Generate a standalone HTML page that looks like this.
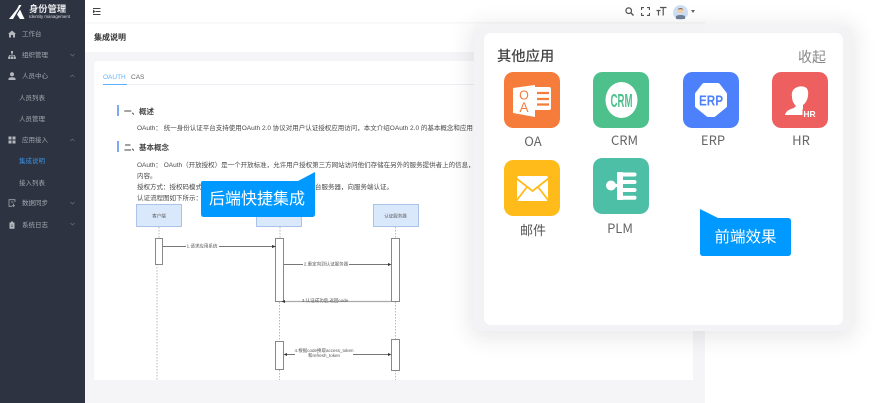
<!DOCTYPE html>
<html>
<head>
<meta charset="utf-8">
<style>
html,body{margin:0;padding:0;width:879px;height:403px;overflow:hidden;background:#fff}
*{box-sizing:border-box}
body{font-family:"Liberation Sans","Noto Sans CJK SC",sans-serif;position:relative}
.a{position:absolute;white-space:nowrap;line-height:1}
#side{position:absolute;left:0;top:0;width:85px;height:403px;background:#2d3340;}
.soft{filter:blur(.35px)}
.m{position:absolute;left:22px;font-size:6.5px;line-height:8px;color:#a4a8b0;white-space:nowrap}
.s{position:absolute;left:19px;font-size:6.5px;line-height:8px;color:#a4a8b0;white-space:nowrap}
.t{position:absolute;font-size:6.5px;line-height:8px;color:#4a4a4a;white-space:nowrap}
.h{position:absolute;left:124px;font-size:7.5px;line-height:9px;font-weight:bold;color:#444;white-space:nowrap}
.b{position:absolute;left:117px;width:2px;height:11px;background:#7da9f2}
.ic{position:absolute;width:56px;height:56px;border-radius:9px}
.l{position:absolute;font-family:"Noto Sans CJK SC","Liberation Sans",sans-serif;font-size:13px;line-height:16px;color:#666;text-align:center;width:60px;white-space:nowrap}
</style>
</head>
<body>
<!-- page background -->
<div style="position:absolute;left:85px;top:52px;width:620px;height:351px;background:#f5f5f7"></div>
<div style="position:absolute;left:85px;top:0;width:794px;height:22px;background:#fff;box-shadow:0 1px 3px rgba(0,0,0,.05)"></div>
<div class="a" style="left:94px;top:33.500px;font-size:8px;font-weight:bold;color:#333">集成说明</div>

<!-- hamburger -->
<svg style="position:absolute;left:93px;top:8px" width="8" height="7" viewBox="0 0 8 7"><path d="M0 .5H7.5M2.5 3.5H7.5M0 6.5H7.5M0 2.2L1.6 3.5L0 4.8Z" stroke="#444" stroke-width="1" fill="#444"/></svg>

<!-- header icons -->
<svg style="position:absolute;left:625px;top:7px" width="9" height="9" viewBox="0 0 9 9"><circle cx="3.7" cy="3.7" r="2.8" fill="none" stroke="#555" stroke-width="1.2"/><path d="M5.8 5.8L8.5 8.5" stroke="#555" stroke-width="1.4"/></svg>
<svg style="position:absolute;left:641px;top:7px" width="9" height="9" viewBox="0 0 9 9"><path d="M.5 3V.5H3M6 .5H8.5V3M8.5 6V8.5H6M3 8.5H.5V6" fill="none" stroke="#555" stroke-width="1.2"/></svg>
<svg style="position:absolute;left:656px;top:6px" width="11" height="10" viewBox="0 0 11 10"><path d="M4 1.5H10.5M7.2 1.5V9.5M.5 4.5H4.5M2.5 4.5V9.5" fill="none" stroke="#555" stroke-width="1.2"/></svg>
<svg style="position:absolute;left:673px;top:5px" width="15" height="15" viewBox="0 0 15 15"><circle cx="7.5" cy="7.5" r="7.5" fill="#cfe0f5"/><circle cx="7.5" cy="5.5" r="2.8" fill="#f4cfa8"/><path d="M4.7 4.8C5 2.5 10 2.5 10.3 4.8C8.5 3.9 6.5 3.9 4.7 4.8Z" fill="#6b5a4a"/><path d="M3 14V11.5C3 9.5 12 9.5 12 11.5V14Z" fill="#6f7f96"/></svg>
<svg style="position:absolute;left:691px;top:10px" width="4" height="3" viewBox="0 0 4 3"><path d="M0 0H4L2 3Z" fill="#666"/></svg>

<!-- right gutter -->
<div style="position:absolute;left:705px;top:22px;width:174px;height:381px;background:#fff"></div>

<!-- card -->
<div style="position:absolute;left:94px;top:61px;width:599px;height:319px;background:#fff;border-radius:4px 4px 0 0"></div>
<div class="soft">
<div class="a" style="left:103px;top:74.500px;font-size:6.5px;color:#5fb0ff">OAUTH</div>
<div class="a" style="left:131px;top:74.500px;font-size:6.5px;color:#666">CAS</div>
<div style="position:absolute;left:103px;top:83.500px;width:580px;height:1.500px;background:#eceef3"></div>
<div style="position:absolute;left:103px;top:83.500px;width:24px;height:1.500px;background:#5fb0ff"></div>

<div class="b" style="top:105px"></div>
<div class="h" style="top:107px">一、概述</div>
<div class="t" style="left:137px;top:124.500px">OAuth： 统一身份认证平台支持使用OAuth 2.0 协议对用户认证授权应用访问，本文介绍OAuth 2.0 的基本概念和应用</div>
<div class="b" style="top:141px"></div>
<div class="h" style="top:143px">二、基本概念</div>
<div class="t" style="left:137px;top:161.500px">OAuth： OAuth（开放授权）是一个开放标准，允许用户授权第三方网站访问他们存储在另外的服务提供者上的信息，</div>
<div class="t" style="left:137px;top:172.500px">内容。</div>
<div class="t" style="left:137px;top:183.500px">授权方式：授权码模式</div>
<div class="t" style="left:315px;top:183.500px">台服务器，向服务端认证。</div>
<div class="t" style="left:137px;top:194.500px">认证流程图如下所示：</div>

<!-- sequence diagram -->
<svg style="position:absolute;left:130px;top:200px" width="300" height="180" viewBox="130 200 300 180" font-family="Liberation Sans,Noto Sans CJK SC,sans-serif">
<g fill="#dae8fc" stroke="#a9c4eb" stroke-width="1">
<rect x="136.5" y="204.5" width="45" height="22"/>
<rect x="256.5" y="204.5" width="45" height="22"/>
<rect x="373.5" y="204.5" width="45" height="22"/>
</g>
<g stroke="#999" stroke-width=".7" stroke-dasharray="1.5 1.5" fill="none">
<path d="M159 227V238M157 264V380"/>
<path d="M280 227V238M279.5 302V341M279.5 370V380"/>
<path d="M395.5 227V238M395.5 302V339M395.5 370V380"/>
</g>
<g fill="#fff" stroke="#888" stroke-width="1">
<rect x="155.5" y="238.5" width="7" height="26"/>
<rect x="275.5" y="238.5" width="8" height="63"/>
<rect x="391.5" y="238.5" width="8" height="63"/>
<rect x="275.5" y="341.5" width="8" height="28"/>
<rect x="391.5" y="339.5" width="8" height="31"/>
</g>
<g stroke="#777" stroke-width="1" fill="none">
<path d="M163 246.5H186M219 246.5H274M283.5 264.5H303M349 264.5H390"/>
<path d="M391 301.5H302M349 301.5H282" stroke="#aaa" stroke-width="1.2"/>
<path d="M285 354.5H295M353 354.5H390"/>
</g>
<g fill="#333">
<path d="M276 246.5L272 245V248Z M391.5 264.5L388 263V266Z M281.5 301.5L285 300V303Z M283.5 354.5L287 353V356Z M391.5 354.5L388 353V356Z"/>
</g>
<g font-size="4.5" fill="#555" text-anchor="middle">
<text x="159" y="217.5">客户端</text>
<text x="395.5" y="217.5">认证服务器</text>
<text x="202" y="247.5">1.请求应用系统</text>
<text x="326" y="265.5">2.重定向到认证服务器</text>
<text x="325" y="302">3.认证成功后,返回code</text>
<text x="324" y="352">4.根据code换取access_token</text>
<text x="324" y="357">和refresh_token</text>
</g>
</svg>
</div>

<!-- sidebar -->
<div id="side">
<div class="soft">
<svg style="position:absolute;left:9px;top:5px" width="16" height="15" viewBox="0 0 16 15"><path d="M0 14L8 4L10 0H12.5L7 9L4 14Z" fill="#fff"/><path d="M8 9.5L11 4.500L15.5 14H11Z" fill="#fff"/></svg>
<div class="a" style="left:29px;top:5px;font-size:9.3px;font-weight:bold;color:#e8e8ea">身份管理</div>
<div class="a" style="left:29px;top:14.500px;font-size:4.4px;color:#d8d8dc">Identity management</div>

<svg style="position:absolute;left:8px;top:30px" width="8" height="8" viewBox="0 0 8 8"><path d="M4 .5L8 4H7V7.5H5V5H3V7.5H1V4H0Z" fill="#b4b7bd"/></svg>
<div class="m" style="top:30.500px">工作台</div>
<svg style="position:absolute;left:8px;top:51px" width="8" height="8" viewBox="0 0 8 8"><path d="M3 0H5V2.5H3ZM.2 5.5H2.4V8H.2ZM2.9 5.5H5.1V8H2.9ZM5.6 5.5H7.8V8H5.6ZM3.7 2.5H4.3V4H7V5.5H6.4V4.6H1.6V5.5H1V4H3.7Z" fill="#b4b7bd"/></svg>
<div class="m" style="top:51.500px">组织管理</div>
<svg style="position:absolute;left:8px;top:72px" width="8" height="8" viewBox="0 0 8 8"><circle cx="4" cy="2.2" r="2" fill="#b4b7bd"/><path d="M.5 8V6.5C.5 4.8 7.5 4.8 7.5 6.5V8Z" fill="#b4b7bd"/></svg>
<div class="m" style="top:72.500px">人员中心</div>
<div class="s" style="top:94.500px">人员列表</div>
<div class="s" style="top:115.500px">人员管理</div>
<svg style="position:absolute;left:8px;top:136px" width="8" height="8" viewBox="0 0 8 8"><path d="M.5 .5H3.5V3.5H.5ZM4.5 .5H7.5V3.5H4.5ZM.5 4.5H3.5V7.5H.5ZM4.5 4.5H7.5V7.5H4.5Z" fill="#b4b7bd"/></svg>
<div class="m" style="top:136.500px">应用接入</div>
<div class="s" style="top:157.500px;color:#3d8fe0">集成说明</div>
<div class="s" style="top:179.500px">接入列表</div>
<svg style="position:absolute;left:8px;top:199px" width="8" height="8" viewBox="0 0 8 8"><path d="M7 3V.7H1V7.3H4M3 3H5.5M5.5 4.5L5.5 7.5M4.3 6.3L5.5 7.5L6.7 6.3" fill="none" stroke="#a4a8b0" stroke-width=".8"/></svg>
<div class="m" style="top:199.500px">数据同步</div>
<svg style="position:absolute;left:8px;top:221px" width="8" height="8" viewBox="0 0 8 8"><path d="M1.5 1.5H3V.5H5V1.5H6.5V7.7H1.5Z" fill="#b4b7bd"/><path d="M3 4H5M3 5.5H5" stroke="#2d3340" stroke-width=".6"/></svg>
<div class="m" style="top:221.500px">系统日志</div>

<svg style="position:absolute;left:0;top:0" width="85" height="240" viewBox="0 0 85 240" fill="none" stroke="#6c7078" stroke-width=".7">
<path d="M70.5 54L72.5 56L74.5 54"/>
<path d="M70.5 77L72.5 75L74.5 77"/>
<path d="M70.5 141L72.5 139L74.5 141"/>
<path d="M70.5 202L72.5 204L74.5 202"/>
<path d="M70.5 223L72.5 225L74.5 223"/>
</svg>
</div>
</div>

<!-- back-end tag -->
<svg style="position:absolute;left:200px;top:171px" width="116" height="47" viewBox="200 171 116 47"><path d="M203 181H298L315 172V214Q315 217 312 217H204Q201 217 201 214V183Q201 181 203 181Z" fill="#0099ff"/></svg>
<div class="a" style="left:209px;top:192px;font-size:16px;color:#fff">后端快捷集成</div>

<!-- popup -->
<div style="position:absolute;left:474px;top:26px;width:377px;height:305px;background:#f3f3f6;border-radius:6px;box-shadow:0 3px 20px 5px rgba(50,50,60,.10)"></div>
<div style="position:absolute;left:484px;top:33px;width:359px;height:292px;background:#fff;border-radius:7px"></div>
<div class="a" style="left:497px;top:50px;font-size:14.3px;font-weight:500;color:#444">其他应用</div>
<div class="a" style="left:798px;top:50px;font-size:14px;color:#888">收起</div>

<!-- OA -->
<svg class="ic" style="left:504px;top:72px" viewBox="0 0 56 56"><rect width="56" height="56" rx="9" fill="#f57c3a"/><path d="M9 16L31 13V45L9 41Z" fill="#fff"/><path d="M31 15H45Q47 15 47 17V36Q47 38 45 38H31Z" fill="#fff"/><path d="M33 21H45M33 27H45M33 32.500H45" stroke="#f57c3a" stroke-width="2.200"/><text x="20" y="27.500" font-size="12.500" text-anchor="middle" fill="#f57c3a" font-family="Liberation Sans,sans-serif">O</text><text x="20" y="40" font-size="13.500" text-anchor="middle" fill="#f57c3a" font-family="Liberation Sans,sans-serif">A</text></svg>
<div class="l" style="left:503px;top:133px">OA</div>
<!-- CRM -->
<svg class="ic" style="left:593px;top:72px" viewBox="0 0 56 56"><rect width="56" height="56" rx="9" fill="#4dc08c"/><ellipse cx="28.500" cy="28" rx="16" ry="18" fill="#fff"/><text x="28.500" y="35" font-size="18.500" font-weight="bold" text-anchor="middle" fill="#4dc08c" font-family="Liberation Sans,sans-serif" textLength="22" lengthAdjust="spacingAndGlyphs">CRM</text></svg>
<div class="l" style="left:594.500px;top:132px">CRM</div>
<!-- ERP -->
<svg class="ic" style="left:683px;top:72px" viewBox="0 0 56 56"><rect width="56" height="56" rx="9" fill="#4d81fb"/><path d="M21 13H35L42 22V34L31 43H25L14 34V22Z" fill="#fff" stroke="#fff" stroke-width="4" stroke-linejoin="round"/><text x="28" y="33.500" font-size="14.500" font-weight="bold" text-anchor="middle" fill="#4d81fb" font-family="Liberation Sans,sans-serif" textLength="24" lengthAdjust="spacingAndGlyphs">ERP</text></svg>
<div class="l" style="left:683px;top:132px">ERP</div>
<!-- HR -->
<svg class="ic" style="left:772px;top:72px" viewBox="0 0 56 56"><rect width="56" height="56" rx="9" fill="#ee6060"/><path d="M22 17Q27 13 33 15Q37 17 36 24Q35 30 31 33V43H13Q14 38 22 36L24 34Q20 30 20 25Q19 20 22 17Z" fill="#fff"/><rect x="30.500" y="37" width="15" height="9" fill="#ee6060"/><text x="37.500" y="45" font-size="8.500" font-weight="bold" text-anchor="middle" fill="#fff" font-family="Liberation Sans,sans-serif">HR</text></svg>
<div class="l" style="left:771px;top:132px">HR</div>
<!-- Mail -->
<svg class="ic" style="left:504px;top:160px" viewBox="0 0 56 56"><rect width="56" height="56" rx="9" fill="#ffbb1a"/><rect x="13" y="16" width="31" height="25" rx="2" fill="#fff"/><path d="M12.500 18.500L28.500 31L44.500 18.500M12.500 40.500L23 27M44.500 40.500L34 27" fill="none" stroke="#ffbb1a" stroke-width="1.800"/></svg>
<div class="l" style="left:503px;top:222px;color:#555">邮件</div>
<!-- PLM -->
<svg class="ic" style="left:593px;top:158px" viewBox="0 0 56 56"><rect width="56" height="56" rx="9" fill="#4dbfa7"/><circle cx="18" cy="27.500" r="5" fill="#fff"/><rect x="21" y="26" width="4" height="3" fill="#fff"/><rect x="24" y="14" width="6" height="28" rx="1" fill="#fff"/><path d="M29 16.500H41.500M29 24H41.500M29 32H41.500M29 39.700H41.500" stroke="#fff" stroke-width="4" stroke-linecap="round"/></svg>
<div class="l" style="left:590px;top:220px">PLM</div>

<!-- front-end tag -->
<svg style="position:absolute;left:699px;top:208px" width="93" height="49" viewBox="699 208 93 49"><path d="M700 209L718 218H788Q791 218 791 221V253Q791 256 788 256H703Q700 256 700 253Z" fill="#0099ff"/></svg>
<div class="a" style="left:714.500px;top:230px;font-size:15.500px;color:#fff">前端效果</div>
</body>
</html>
